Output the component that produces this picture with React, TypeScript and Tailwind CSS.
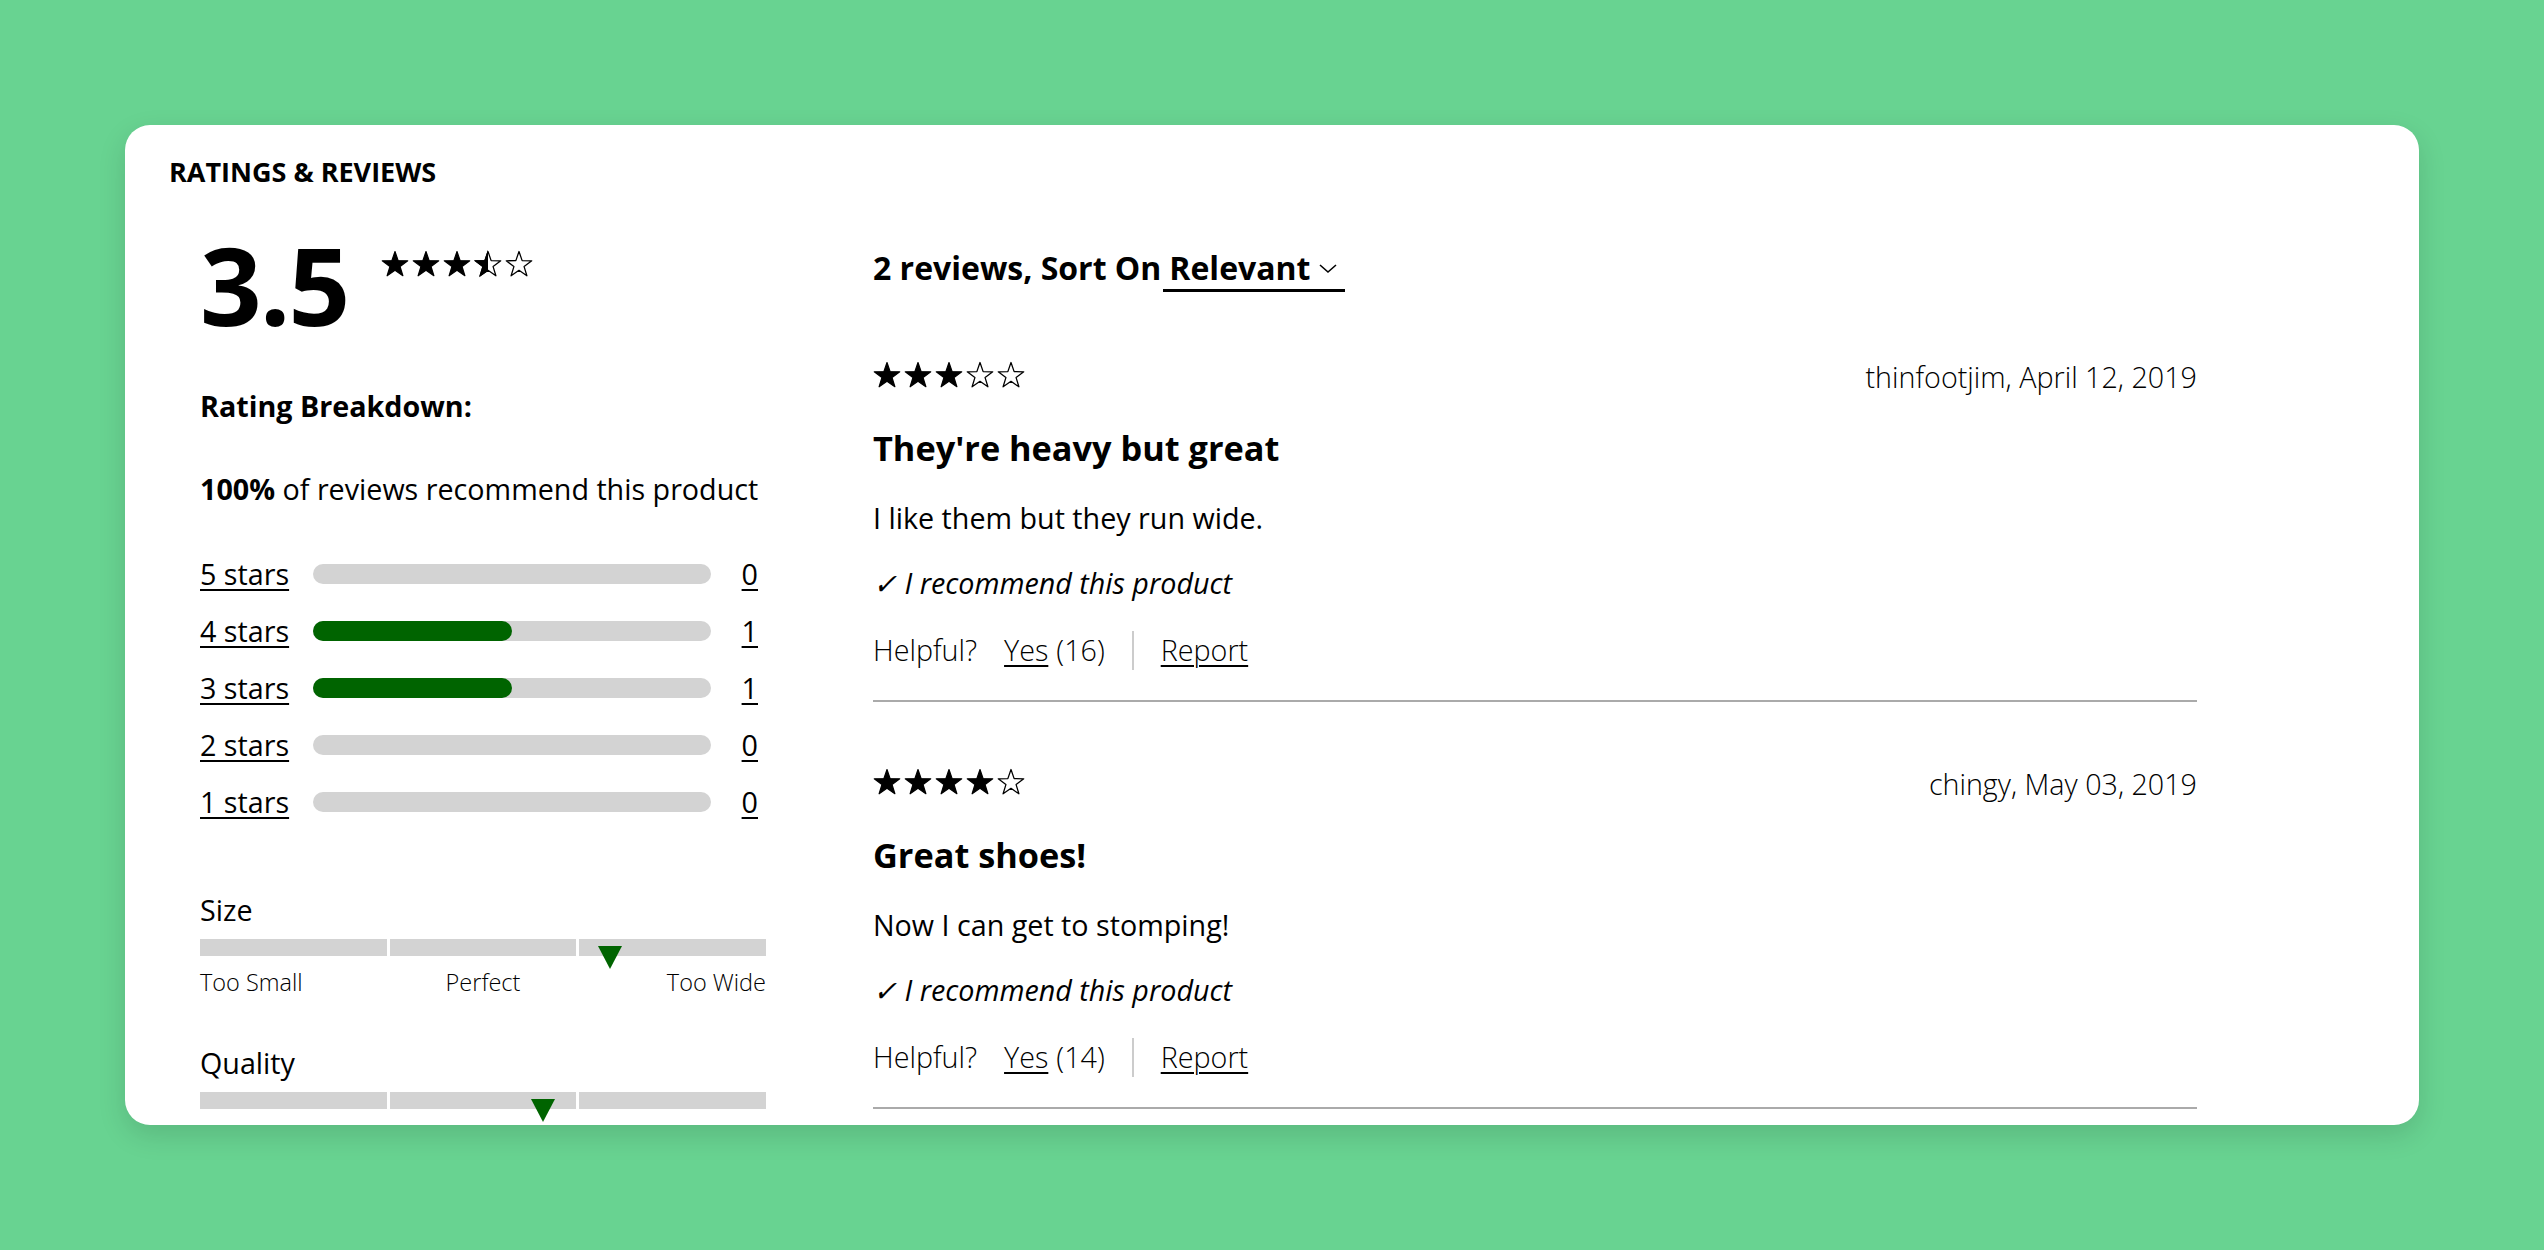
const STAR =
  "M12 1.3L14.7 9.08L22.94 9.25L16.37 14.22L18.76 22.1L12 17.4L5.24 22.1L7.63 14.22L1.06 9.25L9.3 9.08Z";

const Star = ({ kind }: { kind: "full" | "half" | "empty" }) => (
  <svg width="28" height="28" viewBox="0 0 24 24" className="shrink-0">
    <defs>
      <clipPath id="half-clip">
        <rect x="0" y="0" width="12" height="24" />
      </clipPath>
    </defs>
    {kind === "full" && <path d={STAR} fill="#000" stroke="#000" strokeWidth="1" strokeLinejoin="round" />}
    {kind !== "full" && <path d={STAR} fill="#fff" stroke="#000" strokeWidth="1.1" strokeLinejoin="round" />}
    {kind === "half" && <path d={STAR} fill="#000" stroke="#000" strokeWidth="1" clipPath="url(#half-clip)" />}
  </svg>
);

const Stars = ({ value }: { value: number }) => (
  <div className="flex gap-[3px]">
    {[1, 2, 3, 4, 5].map((i) => (
      <Star key={i} kind={value >= i ? "full" : value >= i - 0.5 ? "half" : "empty"} />
    ))}
  </div>
);

const breakdown = [
  { label: "5 stars", count: 0 },
  { label: "4 stars", count: 1 },
  { label: "3 stars", count: 1 },
  { label: "2 stars", count: 0 },
  { label: "1 stars", count: 0 },
];

const FitScale = ({ title, marker, labels }: { title: string; marker: number; labels?: string[] }) => (
  <div>
    <div className="text-[28.7px] leading-[40px]">{title}</div>
    <div className="relative mt-[9px] flex gap-[3px] w-[566px]">
      <div className="flex-1 h-[17px] bg-[#d3d3d3]" />
      <div className="flex-1 h-[17px] bg-[#d3d3d3]" />
      <div className="flex-1 h-[17px] bg-[#d3d3d3]" />
      <svg
        width="24"
        height="23"
        viewBox="0 0 24 23"
        className="absolute top-[7px]"
        style={{ left: marker }}
      >
        <polygon points="0,0 24,0 12,23" fill="#006400" />
      </svg>
    </div>
    {labels && (
      <div className="mt-[11px] grid grid-cols-3 w-[566px] text-[23.5px] leading-[30px] font-light">
        <span className="text-left">{labels[0]}</span>
        <span className="text-center">{labels[1]}</span>
        <span className="text-right">{labels[2]}</span>
      </div>
    )}
  </div>
);

const reviews = [
  {
    rating: 3,
    user: "thinfootjim, April 12, 2019",
    title: "They're heavy but great",
    body: "I like them but they run wide.",
    helpful: 16,
  },
  {
    rating: 4,
    user: "chingy, May 03, 2019",
    title: "Great shoes!",
    body: "Now I can get to stomping!",
    helpful: 14,
  },
];

const Review = ({ r }: { r: (typeof reviews)[number] }) => (
  <div className="pt-[60px] pb-[30px] border-b-2 border-[#aaaaaa]">
    <div className="flex items-center justify-between h-[40px]">
      <Stars value={r.rating} />
      <span className="text-[28.7px] font-light pt-[3px]">{r.user}</span>
    </div>
    <h3 className="mt-[29px] text-[34.3px] leading-[48px] font-bold">{r.title}</h3>
    <p className="mt-[26px] text-[28.7px] leading-[40px]">{r.body}</p>
    <p className="mt-[25px] text-[28.7px] leading-[40px] italic">✓ I recommend this product</p>
    <div className="mt-[27px] flex items-center h-[40px] text-[28.7px] font-light">
      <span>Helpful?</span>
      <span className="ml-[27px] underline decoration-2 underline-offset-4">Yes</span>
      <span className="ml-[8px]">({r.helpful})</span>
      <div className="ml-[27px] w-[2px] h-[39px] bg-[#cccccc]" />
      <span className="ml-[27px] underline decoration-2 underline-offset-4">Report</span>
    </div>
  </div>
);

export default function App() {
  return (
    <div className="w-full h-[1250px] bg-[#68d391] pt-[125px] pl-[125px] text-black font-['Open_Sans',sans-serif]">
      <div className="w-[2294px] h-[1000px] rounded-[25px] bg-white overflow-hidden shadow-[0_10px_28px_rgba(0,0,0,0.13)] pt-[29px] pl-[44px]">
        <h2 className="text-[27px] leading-[36px] font-bold">RATINGS &amp; REVIEWS</h2>
        <div className="flex">
          {/* summary column */}
          <div className="ml-[31px] w-[566px] mt-[35px]">
            <div className="flex items-start">
              <span className="text-[108px] leading-[120px] font-bold tracking-[-2px]">3.5</span>
              <div className="ml-[33px] mt-[25px]">
                <Stars value={3.5} />
              </div>
            </div>
            <div className="mt-[41px] text-[28.7px] leading-[40px] font-bold">Rating Breakdown:</div>
            <div className="mt-[43px] text-[28.7px] leading-[40px]">
              <b>100%</b> of reviews recommend this product
            </div>
            <div className="mt-[45px] flex flex-col gap-[17px] w-[558px]">
              {breakdown.map((row) => (
                <div key={row.label} className="flex items-center h-[40px] text-[28.7px]">
                  <span className="w-[113px] underline decoration-2 underline-offset-4">{row.label}</span>
                  <div className="w-[398px] h-[20px] rounded-full bg-[#d3d3d3]">
                    <div
                      className="h-full rounded-full bg-[#006400]"
                      style={{ width: `${(row.count / 2) * 100}%` }}
                    />
                  </div>
                  <span className="ml-auto underline decoration-2 underline-offset-4">{row.count}</span>
                </div>
              ))}
            </div>
            <div className="mt-[68px]">
              <FitScale title="Size" marker={398} labels={["Too Small", "Perfect", "Too Wide"]} />
            </div>
            <div className="mt-[46px]">
              <FitScale title="Quality" marker={331} />
            </div>
          </div>

          {/* reviews column */}
          <div className="ml-[107px] w-[1324px] mt-[56px]">
            <div className="flex items-center h-[44px] text-[32px] font-bold">
              <span>2 reviews, Sort On</span>
              <span className="ml-[2px] flex items-center h-[47px] pt-[3px] border-b-[3px] border-black pl-[6px] pr-[7px]">
                Relevant
                <svg width="20" height="12" viewBox="0 0 20 12" className="ml-[8px]">
                  <polyline points="2,3 10,10 18,3" fill="none" stroke="#000" strokeWidth="1.6" />
                </svg>
              </span>
            </div>
            <div className="mt-[5px]">
              {reviews.map((r) => (
                <Review key={r.user} r={r} />
              ))}
            </div>
          </div>
        </div>
      </div>
    </div>
  );
}
